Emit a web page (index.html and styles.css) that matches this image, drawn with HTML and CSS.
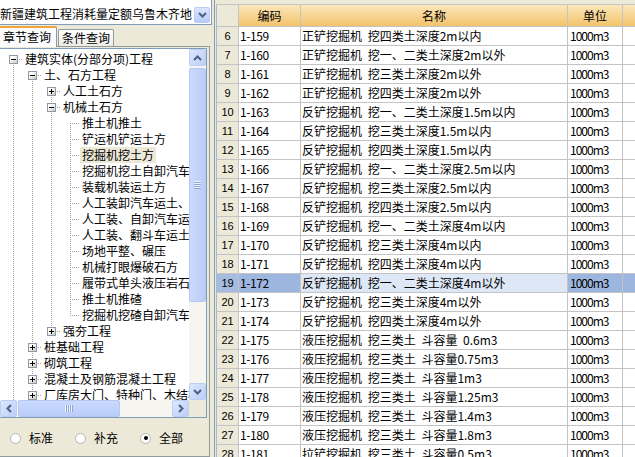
FILE: index.html
```html
<!DOCTYPE html>
<html lang="zh">
<head>
<meta charset="utf-8">
<title>定额查询</title>
<link rel="stylesheet" href="styles.css">
</head>
<body>
<div class="app">
  <div class="left">
    <div class="combo">
      <span class="combo-text">新疆建筑工程消耗量定额乌鲁木齐地</span>
      <span class="combo-btn"><svg width="9" height="6" viewBox="0 0 9 6"><path d="M1 1l3.5 3.5L8 1" fill="none" stroke="#4d6185" stroke-width="2"/></svg></span>
    </div>
    <div class="tabs">
      <div class="tab active">章节查询</div>
      <div class="tab">条件查询</div>
    </div>
    <div class="tabpanel">
      <div class="tree">
        <div class="tree-body">
          <div class="tree-rows">
            <div class="row"><span class="c first"><i class="box"></i></span><span class="lbl">建筑实体(分部分项)工程</span></div>
            <div class="row"><span class="c v"></span><span class="c first"><i class="box"></i></span><span class="lbl">土、石方工程</span></div>
            <div class="row"><span class="c v"></span><span class="c v"></span><span class="c first"><i class="box plus"></i></span><span class="lbl">人工土石方</span></div>
            <div class="row"><span class="c v"></span><span class="c v"></span><span class="c mid"><i class="box"></i></span><span class="lbl">机械土石方</span></div>
            <div class="row"><span class="c v"></span><span class="c v"></span><span class="c v"></span><span class="c first"></span><span class="lbl">推土机推土</span></div>
            <div class="row"><span class="c v"></span><span class="c v"></span><span class="c v"></span><span class="c mid"></span><span class="lbl">铲运机铲运土方</span></div>
            <div class="row"><span class="c v"></span><span class="c v"></span><span class="c v"></span><span class="c mid"></span><span class="lbl hl">挖掘机挖土方</span></div>
            <div class="row"><span class="c v"></span><span class="c v"></span><span class="c v"></span><span class="c mid"></span><span class="lbl">挖掘机挖土自卸汽车运土方</span></div>
            <div class="row"><span class="c v"></span><span class="c v"></span><span class="c v"></span><span class="c mid"></span><span class="lbl">装载机装运土方</span></div>
            <div class="row"><span class="c v"></span><span class="c v"></span><span class="c v"></span><span class="c mid"></span><span class="lbl">人工装卸汽车运土、石方</span></div>
            <div class="row"><span class="c v"></span><span class="c v"></span><span class="c v"></span><span class="c mid"></span><span class="lbl">人工装、自卸汽车运土方</span></div>
            <div class="row"><span class="c v"></span><span class="c v"></span><span class="c v"></span><span class="c mid"></span><span class="lbl">人工装、翻斗车运土方</span></div>
            <div class="row"><span class="c v"></span><span class="c v"></span><span class="c v"></span><span class="c mid"></span><span class="lbl">场地平整、碾压</span></div>
            <div class="row"><span class="c v"></span><span class="c v"></span><span class="c v"></span><span class="c mid"></span><span class="lbl">机械打眼爆破石方</span></div>
            <div class="row"><span class="c v"></span><span class="c v"></span><span class="c v"></span><span class="c mid"></span><span class="lbl">履带式单头液压岩石破碎机</span></div>
            <div class="row"><span class="c v"></span><span class="c v"></span><span class="c v"></span><span class="c mid"></span><span class="lbl">推土机推碴</span></div>
            <div class="row"><span class="c v"></span><span class="c v"></span><span class="c v"></span><span class="c last"></span><span class="lbl">挖掘机挖碴自卸汽车运碴</span></div>
            <div class="row"><span class="c v"></span><span class="c v"></span><span class="c last"><i class="box plus"></i></span><span class="lbl">强夯工程</span></div>
            <div class="row"><span class="c v"></span><span class="c mid"><i class="box plus"></i></span><span class="lbl">桩基础工程</span></div>
            <div class="row"><span class="c v"></span><span class="c mid"><i class="box plus"></i></span><span class="lbl">砌筑工程</span></div>
            <div class="row"><span class="c v"></span><span class="c mid"><i class="box plus"></i></span><span class="lbl">混凝土及钢筋混凝土工程</span></div>
            <div class="row"><span class="c v"></span><span class="c mid"><i class="box plus"></i></span><span class="lbl">厂库房大门、特种门、木结构工程</span></div>
          </div>
          <div class="vscroll">
            <span class="sbtn"><svg width="9" height="6" viewBox="0 0 9 6"><path d="M1 5l3.5-3.5L8 5" fill="none" stroke="#4d6185" stroke-width="2"/></svg></span>
            <span class="vthumb"><span class="grip-v"></span></span>
            <span class="vtrack"></span>
            <span class="sbtn"><svg width="9" height="6" viewBox="0 0 9 6"><path d="M1 1l3.5 3.5L8 1" fill="none" stroke="#4d6185" stroke-width="2"/></svg></span>
          </div>
        </div>
        <div class="hscroll-row">
          <div class="hscroll">
            <span class="sbtn"><svg width="6" height="9" viewBox="0 0 6 9"><path d="M5 1L1.5 4.5L5 8" fill="none" stroke="#4d6185" stroke-width="2"/></svg></span>
            <span class="hthumb"><span class="grip-h"></span></span>
            <span class="htrack"></span>
            <span class="sbtn"><svg width="6" height="9" viewBox="0 0 6 9"><path d="M1 1l3.5 3.5L1 8" fill="none" stroke="#4d6185" stroke-width="2"/></svg></span>
          </div>
          <span class="corner"></span>
        </div>
      </div>
      <div class="radios">
        <label class="radio"><span class="dot"></span>标准</label>
        <label class="radio"><span class="dot"></span>补充</label>
        <label class="radio"><span class="dot on"></span>全部</label>
      </div>
    </div>
  </div>
  <div class="right">
    <div class="grid">
      <div class="tr head"><div class="rh"></div><div class="th">编码</div><div class="th">名称</div><div class="th">单位</div><div class="th"></div></div>
      <div class="tr"><div class="rh">6</div><div class="td">1-159</div><div class="td">正铲挖掘机 挖四类土深度2m以内</div><div class="td">1000m3</div><div class="td"></div></div>
      <div class="tr"><div class="rh">7</div><div class="td">1-160</div><div class="td">正铲挖掘机 挖一、二类土深度2m以外</div><div class="td">1000m3</div><div class="td"></div></div>
      <div class="tr"><div class="rh">8</div><div class="td">1-161</div><div class="td">正铲挖掘机 挖三类土深度2m以外</div><div class="td">1000m3</div><div class="td"></div></div>
      <div class="tr"><div class="rh">9</div><div class="td">1-162</div><div class="td">正铲挖掘机 挖四类土深度2m以外</div><div class="td">1000m3</div><div class="td"></div></div>
      <div class="tr"><div class="rh">10</div><div class="td">1-163</div><div class="td">反铲挖掘机 挖一、二类土深度1.5m以内</div><div class="td">1000m3</div><div class="td"></div></div>
      <div class="tr"><div class="rh">11</div><div class="td">1-164</div><div class="td">反铲挖掘机 挖三类土深度1.5m以内</div><div class="td">1000m3</div><div class="td"></div></div>
      <div class="tr"><div class="rh">12</div><div class="td">1-165</div><div class="td">反铲挖掘机 挖四类土深度1.5m以内</div><div class="td">1000m3</div><div class="td"></div></div>
      <div class="tr"><div class="rh">13</div><div class="td">1-166</div><div class="td">反铲挖掘机 挖一、二类土深度2.5m以内</div><div class="td">1000m3</div><div class="td"></div></div>
      <div class="tr"><div class="rh">14</div><div class="td">1-167</div><div class="td">反铲挖掘机 挖三类土深度2.5m以内</div><div class="td">1000m3</div><div class="td"></div></div>
      <div class="tr"><div class="rh">15</div><div class="td">1-168</div><div class="td">反铲挖掘机 挖四类土深度2.5m以内</div><div class="td">1000m3</div><div class="td"></div></div>
      <div class="tr"><div class="rh">16</div><div class="td">1-169</div><div class="td">反铲挖掘机 挖一、二类土深度4m以内</div><div class="td">1000m3</div><div class="td"></div></div>
      <div class="tr"><div class="rh">17</div><div class="td">1-170</div><div class="td">反铲挖掘机 挖三类土深度4m以内</div><div class="td">1000m3</div><div class="td"></div></div>
      <div class="tr"><div class="rh">18</div><div class="td">1-171</div><div class="td">反铲挖掘机 挖四类土深度4m以内</div><div class="td">1000m3</div><div class="td"></div></div>
      <div class="tr sel"><div class="rh">19</div><div class="td">1-172</div><div class="td">反铲挖掘机 挖一、二类土深度4m以外</div><div class="td">1000m3</div><div class="td"></div></div>
      <div class="tr"><div class="rh">20</div><div class="td">1-173</div><div class="td">反铲挖掘机 挖三类土深度4m以外</div><div class="td">1000m3</div><div class="td"></div></div>
      <div class="tr"><div class="rh">21</div><div class="td">1-174</div><div class="td">反铲挖掘机 挖四类土深度4m以外</div><div class="td">1000m3</div><div class="td"></div></div>
      <div class="tr"><div class="rh">22</div><div class="td">1-175</div><div class="td">液压挖掘机 挖三类土 斗容量 0.6m3</div><div class="td">1000m3</div><div class="td"></div></div>
      <div class="tr"><div class="rh">23</div><div class="td">1-176</div><div class="td">液压挖掘机 挖三类土 斗容量0.75m3</div><div class="td">1000m3</div><div class="td"></div></div>
      <div class="tr"><div class="rh">24</div><div class="td">1-177</div><div class="td">液压挖掘机 挖三类土 斗容量1m3</div><div class="td">1000m3</div><div class="td"></div></div>
      <div class="tr"><div class="rh">25</div><div class="td">1-178</div><div class="td">液压挖掘机 挖三类土 斗容量1.25m3</div><div class="td">1000m3</div><div class="td"></div></div>
      <div class="tr"><div class="rh">26</div><div class="td">1-179</div><div class="td">液压挖掘机 挖三类土 斗容量1.4m3</div><div class="td">1000m3</div><div class="td"></div></div>
      <div class="tr"><div class="rh">27</div><div class="td">1-180</div><div class="td">液压挖掘机 挖三类土 斗容量1.8m3</div><div class="td">1000m3</div><div class="td"></div></div>
      <div class="tr"><div class="rh">28</div><div class="td">1-181</div><div class="td">拉铲挖掘机 挖三类土 斗容量0.5m3</div><div class="td">1000m3</div><div class="td"></div></div>
    </div>
  </div>
</div>
</body>
</html>
```

FILE: styles.css
```css
* { box-sizing: border-box; }
html, body { margin: 0; padding: 0; }
body {
  width: 635px; height: 457px; overflow: hidden;
  background: #ece9d8;
  font-family: "Noto Sans CJK SC", "Liberation Sans", sans-serif;
  font-size: 12px; color: #000;
}
.app { display: flex; height: 457px; }

/* ---------- left ---------- */
.left { width: 212px; flex: none; display: flex; flex-direction: column; }
.combo {
  height: 25px; background: #fff;
  border-right: 1px solid #7f9db9; border-bottom: 1px solid #7f9db9;
  display: flex; align-items: flex-start;
}
.combo-text { width: 194px; line-height: 16px; padding-top: 6px; white-space: nowrap; overflow: hidden; }
.combo-btn {
  width: 16px; height: 16px; margin-top: 7px;
  border: 1px solid #b9cbf3; border-radius: 2px;
  background: linear-gradient(#dbe6fe, #b9ccf8);
  display: flex; align-items: center; justify-content: center;
}
.tabs { height: 21px; display: flex; align-items: flex-end; }
.tab {
  width: 56px; height: 17px; margin-left: 1px;
  border: 1px solid #919b9c; border-bottom: none; border-radius: 2px 2px 0 0;
  background: linear-gradient(#fff, #ecebe5);
  text-align: center; line-height: 15px;
}
.tab.active {
  width: 58px; height: 21px; margin-left: -1px; margin-bottom: -1px;
  position: relative; z-index: 1;
  border-top: 2px solid #f0a43a; background: #fcfcfe;
  text-align: left; padding-left: 3px; line-height: 18px;
}
.tabpanel {
  width: 210px; flex: 1;
  border: 1px solid #919b9c; border-left: none;
  background: #ece9d8; padding-top: 1px;
  display: flex; flex-direction: column;
}
.tree {
  width: 207px; height: 370px; background: #fff;
  border: 1px solid #7f9db9; border-left: none;
  display: flex; flex-direction: column;
}
.tree-body { display: flex; height: 351px; }
.tree-rows { width: 189px; overflow: hidden; padding: 2px 0 0 4px; }
.row { display: flex; height: 16px; white-space: nowrap; }
.c {
  --dv: repeating-linear-gradient(#a0a0a0 0 1px, transparent 1px 2px);
  --dh: repeating-linear-gradient(90deg, #a0a0a0 0 1px, transparent 1px 2px);
  width: 19px; height: 16px; flex: none;
  display: flex; align-items: center; justify-content: center;
}
.c.v { background: var(--dv) 9px 0 / 1px 16px no-repeat; }
.c.first { background: var(--dh) 9px 8px / 10px 1px no-repeat, var(--dv) 9px 8px / 1px 8px no-repeat; }
.c.mid { background: var(--dh) 9px 8px / 10px 1px no-repeat, var(--dv) 9px 0 / 1px 16px no-repeat; }
.c.last { background: var(--dh) 9px 8px / 10px 1px no-repeat, var(--dv) 9px 0 / 1px 8px no-repeat; }
.box {
  display: block; width: 9px; height: 9px; margin-right: 1px;
  border: 1px solid #8f9aa8;
  background: linear-gradient(#000, #000) center / 5px 1px no-repeat, linear-gradient(135deg, #fff 30%, #c9c6b8);
}
.box.plus {
  background: linear-gradient(#000, #000) center / 5px 1px no-repeat,
              linear-gradient(#000, #000) center / 1px 5px no-repeat,
              linear-gradient(135deg, #fff 30%, #c9c6b8);
}
.lbl { line-height: 16px; padding: 0 2px; }
.lbl.hl { background: #ece9d8; }

.vscroll { width: 17px; flex: none; display: flex; flex-direction: column; background: #f6f5f0; }
.sbtn {
  width: 17px; height: 17px; flex: none;
  border: 1px solid #bccdf5; border-radius: 2px;
  background: linear-gradient(135deg, #dce7fe, #bccff8);
  display: flex; align-items: center; justify-content: center;
}
.vthumb {
  height: 234px; margin-top: 2px; flex: none;
  border: 1px solid #b3c7f5; border-radius: 2px;
  background: linear-gradient(90deg, #cbdafd, #b9cdf9);
  display: flex; align-items: center; justify-content: center;
}
.grip-v { width: 7px; height: 8px; background: repeating-linear-gradient(#eef3fe 0 1px, #8aa5e0 1px 2px); }
.vtrack { flex: 1; }
.hscroll-row { display: flex; height: 17px; }
.hscroll { width: 189px; display: flex; background: #f6f5f0; }
.hthumb {
  width: 102px; margin-left: 1px; flex: none;
  border: 1px solid #b3c7f5; border-radius: 2px;
  background: linear-gradient(#cbdafd, #b9cdf9);
  display: flex; align-items: center; justify-content: center;
}
.grip-h { width: 8px; height: 7px; background: repeating-linear-gradient(90deg, #eef3fe 0 1px, #8aa5e0 1px 2px); }
.htrack { flex: 1; }
.corner { width: 17px; background: #ece9d8; }

.radios { display: flex; padding: 12px 0 0 10px; }
.radio { display: flex; align-items: center; line-height: 16px; margin-right: 22px; }
.dot {
  width: 11px; height: 11px; border-radius: 50%;
  border: 1px solid #b5b5b0; background: #fff; margin-right: 8px;
  display: flex; align-items: center; justify-content: center;
}
.dot.on::after { content: ""; width: 4px; height: 4px; border-radius: 50%; background: #000; }

/* ---------- right ---------- */
.right {
  flex: 1; margin-left: 2px; padding: 4px 0 0 1px;
  border-left: 1px solid #7f9db9; overflow: hidden;
}
.grid {
  display: grid;
  grid-template-columns: 21px 61px 266px 54px 40px;
  grid-auto-rows: 18px;
  grid-template-rows: 21px;
  gap: 1px;
  background: #c4c4c4;
  border-top: 1px solid #c4c4c4; border-left: 1px solid #a9b8cc;
  width: 450px;
}
.tr { display: contents; }
.rh {
  background: #ece9d8; text-align: center; overflow: hidden;
  font-family: "Liberation Sans", sans-serif; font-size: 11px; line-height: 18px;
}
.th {
  background: linear-gradient(#fbe6ba, #f3c36c);
  text-align: center; line-height: 21px; white-space: nowrap;
}
.td { background: #fff; padding-left: 1px; line-height: 18px; white-space: nowrap; overflow: hidden; word-spacing: 3px; }
.td:nth-child(2) { letter-spacing: -0.4px; }
.td:nth-child(4) { padding-left: 2px; letter-spacing: -1px; }
.sel .rh { background: #a5bce0; }
.sel .td { background: #9cb6df; }
.sel .td:nth-child(3) { background: #dde7f5; }
```
